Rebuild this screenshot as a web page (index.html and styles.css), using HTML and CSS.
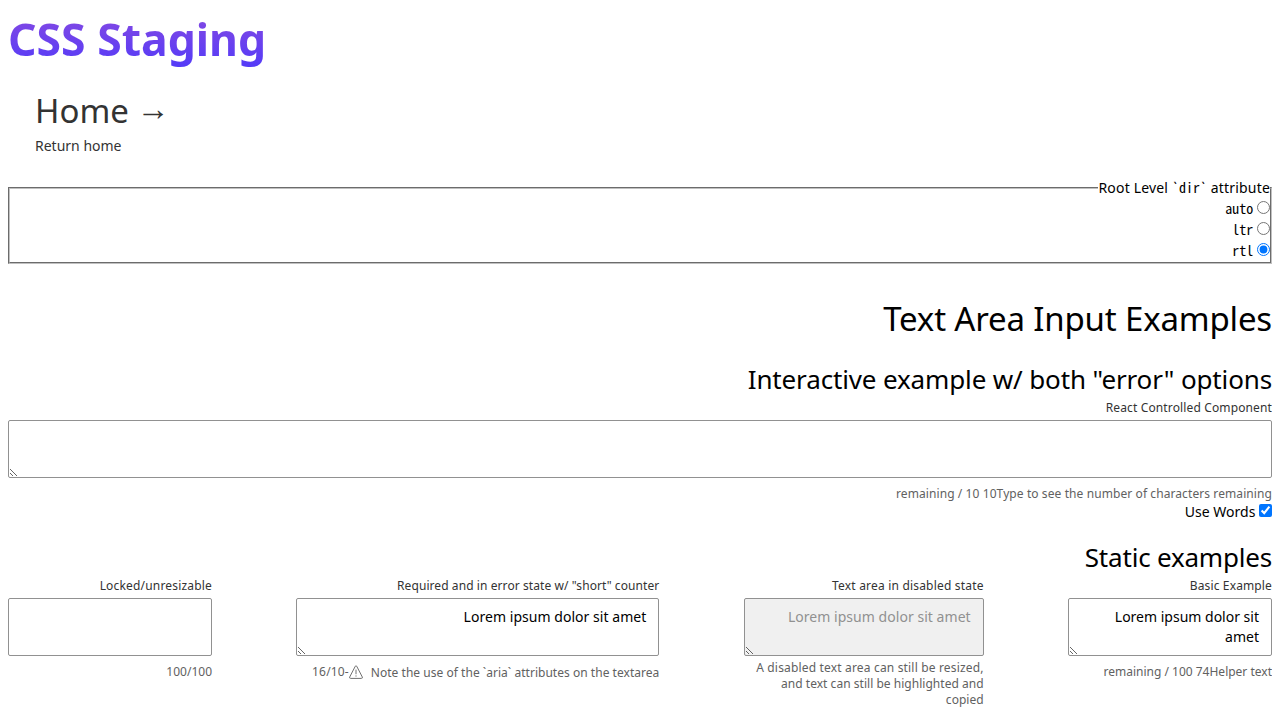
FILE: index.html
```html
<!DOCTYPE html>
<html lang="en">
<head><meta charset="utf-8"><title>CSS Staging</title><link rel="stylesheet" href="styles.css"></head>
<body>
<header dir="ltr">
<h1 class="brand">CSS Staging</h1>
<a class="home"><span class="home-title">Home <span class="arrow">→</span></span><span class="home-sub">Return home</span></a>
</header>
<main dir="rtl">
<fieldset class="dirs">
<legend>Root Level <code>`dir`</code> attribute</legend>
<label class="row"><input type="radio" name="dir"> <code>auto</code></label>
<label class="row"><input type="radio" name="dir"> <code>ltr</code></label>
<label class="row"><input type="radio" name="dir" checked> <code>rtl</code></label>
</fieldset>
<h2 class="title">Text Area Input Examples</h2>
<h3 class="subtitle">Interactive example w/ both "error" options</h3>
<div class="field controlled">
<label class="label">React Controlled Component</label>
<textarea class="area"></textarea>
<div class="help" dir="ltr">remaining / 10 10Type to see the number of characters remaining</div>
</div>
<label class="words"><input type="checkbox" checked> Use Words</label>
<h3 class="subtitle static">Static examples</h3>
<div class="examples">
<div class="field basic"><label class="label">Basic Example</label><textarea class="area">Lorem ipsum dolor sit amet</textarea><div class="help" dir="ltr">remaining / 100 74Helper text</div></div>
<div class="field disabled"><label class="label">Text area in disabled state</label><textarea class="area" disabled>Lorem ipsum dolor sit amet</textarea><div class="help wrap" dir="ltr">A disabled text area can still be resized, <span class="rest">and text can still be highlighted and copied</span></div></div>
<div class="field required"><label class="label">Required and in error state w/ "short" counter</label><textarea class="area">Lorem ipsum dolor sit amet</textarea><div class="help error"><span class="note">Note the use of the `aria` attributes on the textarea</span><svg class="warn" viewBox="0 0 14 14"><path d="M6.3 1.2Q7 .1 7.7 1.2L13.3 12Q13.7 13.4 12.5 13.4H1.5Q.3 13.4.7 12ZM7 4.6v4.6M7 10.4v1.2"/></svg><span class="count" dir="ltr">16/10-</span></div></div>
<div class="field locked"><label class="label">Locked/unresizable</label><textarea class="area"></textarea><div class="help">100/100</div></div>
</div>
</main>
</body>
</html>
```
FILE: styles.css
```css
body { margin: 8px; font: 14px/20px "Noto Sans", sans-serif; color: #000; overflow: hidden; }
.brand { margin: 0; width: max-content; height: 64px; font-size: 44.5px; line-height: 62px; font-weight: 700; background: linear-gradient(to top, #4f39fa, #8a4be0); -webkit-background-clip: text; background-clip: text; color: transparent; }
.home { display: block; margin: 16px 0 0 27px; color: #333; }
.home-title { display: block; font-size: 33px; line-height: 46px; }
.arrow { line-height: 0; vertical-align: 3px; margin-left: -1px; }
.home-sub { display: block; line-height: 24px; }
.dirs { margin: 20px 0 0; padding: 0 0 1px; border: 2px groove #c0c0c0; }
.dirs legend { padding: 0 0 1px; line-height: 19px; letter-spacing: .18px; }
.row { display: block; height: 21px; line-height: 21px; }
.row input, .words input { margin: 0; }
code { font: 14px/1 "Noto Sans Mono CJK JP", monospace; letter-spacing: 0; }
.title { margin: 32px 0 0; font-size: 33px; line-height: 46px; font-weight: 400; letter-spacing: -.17px; }
.subtitle { margin: 19px 0 3px; font-size: 26px; line-height: 36px; font-weight: 400; letter-spacing: -.14px; }
.static { margin-top: 17px; letter-spacing: -.2px; }
.label { display: block; font-size: 12px; line-height: 16px; color: #333; margin-bottom: 4px; letter-spacing: .13px; }
.area { display: block; box-sizing: border-box; width: 100%; height: 58px; padding: 8px 12px; border: 1px solid #919191; border-radius: 2px; font: inherit; color: #000; resize: both; overflow: hidden; }
.area:disabled { background: #f0f0f0; color: #919191; }
.help { font-size: 12px; line-height: 16px; margin-top: 8px; color: #616161; text-align: right; }
.controlled .help { letter-spacing: .09px; }
.words { display: block; }
.examples { display: flex; justify-content: space-between; align-items: flex-start; }
.basic, .locked { width: 204px; }
.disabled { width: 240px; }
.disabled .label { letter-spacing: .19px; }
.required { width: 363px; }
.required .label { letter-spacing: .08px; }
.required .area, .disabled .area { letter-spacing: .04px; }
.help.wrap { margin-top: 4px; letter-spacing: .17px; }
.rest { letter-spacing: .03px; }
.error { display: flex; align-items: flex-start; }
.note { padding-top: 1px; letter-spacing: .03px; }
.warn { width: 14px; height: 14px; margin: 1px 8px 0 0; fill: none; stroke: #707070; stroke-width: 1; }
.count { letter-spacing: .15px; }
.locked .label { letter-spacing: .18px; }
.locked .area { resize: none; }
```
